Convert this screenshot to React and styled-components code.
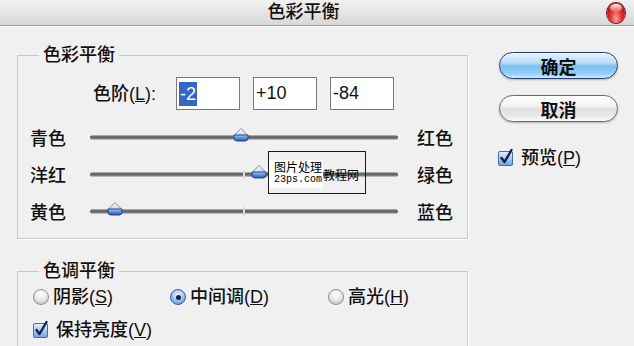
import React from "react";
import styled, { createGlobalStyle } from "styled-components";

const Global = createGlobalStyle`
  html, body { margin: 0; padding: 0; background: #f0f0f0; }
  body {
    width: 634px; height: 346px; overflow: hidden;
    font-family: "Liberation Sans", "Noto Sans CJK SC", sans-serif;
    color: #111;
  }
`;

const Window = styled.div`
  position: relative;
  width: 634px;
  height: 346px;
  overflow: hidden;
  background: #f0f0f0;
  display: flex;
  flex-direction: column;
`;

const TitleBar = styled.div`
  flex: none;
  height: 25px;
  display: flex;
  align-items: center;
  background: linear-gradient(#f1f1f1, #d8d8d8);
  border-bottom: 1px solid #9a9a9a;
  box-shadow: 0 1px 0 #fbfbfb;
`;

const Title = styled.div`
  flex: 1;
  text-align: center;
  font-size: 18px;
  font-weight: 500;
  line-height: 25px;
`;

const CloseBtn = styled.span`
  position: relative;
  flex: none;
  width: 18px;
  height: 20px;
  margin-right: 9px;
  border-radius: 50%;
  background: radial-gradient(ellipse at 50% 78%, #ffa0a0 0%, #ea3434 42%, #b01212 78%, #6e0808 100%);
  box-shadow: 0 0 0 1px #7e1c1c;
  &::before {
    content: "";
    position: absolute;
    left: 3px; right: 3px; top: 1px; height: 8px;
    border-radius: 50%;
    background: linear-gradient(rgba(255,255,255,0.95), rgba(255,255,255,0.15));
  }
`;

const Body = styled.div`
  display: flex;
  padding-left: 17px;
`;

const LeftCol = styled.div`
  width: 451px;
  display: flex;
  flex-direction: column;
`;

const Group = styled.fieldset`
  margin: ${(p) => p.$top}px 0 0 0;
  padding: ${(p) => p.$pt}px 0 ${(p) => p.$pb}px 0;
  border: 1px solid #c8c8c8;
  box-shadow: 1px 1px 0 #ffffff;
  min-width: 0;
`;

const Legend = styled.legend`
  margin-left: 21px;
  padding: 0 4px;
  font-size: 18px;
  font-weight: 500;
  line-height: 20px;
`;

const LevelsRow = styled.div`
  display: flex;
  align-items: center;
  gap: 13px;
  padding-left: 75px;
`;

const LevelsLabel = styled.span`
  width: 70px;
  font-size: 18px;
  font-weight: 500;
  line-height: 24px;
  white-space: nowrap;
`;

const Field = styled.div`
  box-sizing: border-box;
  width: 64px;
  height: 33px;
  border: 1px solid #7a7a7a;
  background: #fff;
  display: flex;
  align-items: center;
  padding-left: 2px;
  font-family: "Liberation Sans", Arial, sans-serif;
  font-size: 18px;
  color: #111;
`;

const Selected = styled.span`
  background: #3467c3;
  color: #fff;
  line-height: 24px;
  padding: 0 1px;
`;

const Sliders = styled.div`
  margin-top: 10px;
  display: flex;
  flex-direction: column;
`;

const SliderRow = styled.div`
  display: grid;
  grid-template-columns: 60px 308px auto;
  align-items: center;
  height: 37px;
  padding-left: 12px;
`;

const SideLabel = styled.span`
  font-size: 18px;
  font-weight: 500;
  line-height: 24px;
  margin-left: ${(p) => (p.$right ? 19 : 0)}px;
`;

const Track = styled.div`
  position: relative;
  height: 5px;
  margin-top: -3px;
  border-radius: 3px;
  background: linear-gradient(#c4c4c4 0%, #5c5c5c 35%, #6c6c6c 65%, #d4d4d4 100%);
  &::after {
    content: "";
    position: absolute;
    left: calc(50% - 1px);
    top: -2px;
    width: 2px;
    height: 9px;
    background: #dcdcdc;
  }
`;

const ThumbWrap = styled.span`
  position: absolute;
  top: -8px;
  width: 17px;
  height: 15px;
  transform: translateX(-50%);
  z-index: 1;
  display: block;
`;

const Watermark = styled.div`
  position: absolute;
  left: 268px;
  top: 151px;
  width: 98px;
  height: 43px;
  box-sizing: border-box;
  border: 1px solid #1a1a1a;
  z-index: 2;
`;

const WmText = styled.div`
  display: inline-flex;
  flex-direction: column;
  background: #fff;
  margin-top: 8px;
  padding: 0 1px 2px 5px;
  color: #000;
`;

const WmLine = styled.span`
  font-family: ${(p) => (p.$mono ? '"Liberation Mono", monospace' : '"Noto Sans CJK SC", sans-serif')};
  font-size: ${(p) => (p.$mono ? 10 : 12)}px;
  line-height: ${(p) => (p.$mono ? 12 : 14)}px;
`;

const WmExtra = styled.span`
  position: absolute;
  left: 54px;
  top: 15px;
  font-family: "Noto Sans CJK SC", sans-serif;
  font-size: 12px;
  line-height: 16px;
  color: #000;
`;

const Side = styled.div`
  margin-left: 31px;
  padding-top: 26px;
  width: 119px;
  display: flex;
  flex-direction: column;
`;

const PillButton = styled.button`
  box-sizing: border-box;
  width: 119px;
  height: 27px;
  margin-top: ${(p) => p.$mt || 0}px;
  padding: 0;
  border-radius: 14px;
  font-family: "Noto Sans CJK SC", sans-serif;
  font-size: 18px;
  font-weight: 700;
  line-height: 1;
  color: #111;
  border: 1.5px solid ${(p) => (p.$primary ? "#2a3a7a" : "#6a6a6a")};
  background: ${(p) =>
    p.$primary
      ? "linear-gradient(#e4f2fd 0%, #b8dcf8 40%, #7ebff1 52%, #90cbf6 80%, #c8edff 100%)"
      : "linear-gradient(#ffffff 0%, #f4f4f4 40%, #dfdfdf 52%, #e9e9e9 80%, #fcfcfc 100%)"};
  box-shadow: inset 0 1px 1px rgba(255, 255, 255, 0.8), 0 1px 2px rgba(0, 0, 0, 0.25);
`;

const CheckRow = styled.label`
  display: flex;
  align-items: center;
  gap: ${(p) => p.$gap || 7}px;
  margin-top: ${(p) => p.$mt || 0}px;
  margin-left: ${(p) => p.$ml || 0}px;
  height: ${(p) => p.$h || 24}px;
  font-size: 18px;
  font-weight: 500;
  line-height: 24px;
`;

const RadioGrid = styled.div`
  display: grid;
  grid-template-columns: 137px 158px auto;
  align-items: center;
  height: 26px;
  padding-left: 15px;
`;

const RadioItem = styled.label`
  display: flex;
  align-items: center;
  gap: 4px;
  font-size: 18px;
  font-weight: 500;
  line-height: 24px;
  white-space: nowrap;
`;

const Radio = styled.span`
  flex: none;
  box-sizing: border-box;
  width: 16px;
  height: 16px;
  border-radius: 50%;
  border: 1px solid ${(p) => (p.$on ? "#3b5c9c" : "#8e8e8e")};
  background: ${(p) =>
    p.$on
      ? "radial-gradient(circle at 50% 35%, #eef6ff 0%, #a2caf3 45%, #4a86d4 100%)"
      : "radial-gradient(circle at 50% 30%, #ffffff 0%, #e8e8e8 50%, #b6b6b6 100%)"};
  display: grid;
  place-items: center;
  &::after {
    content: "";
    width: 5px;
    height: 5px;
    border-radius: 50%;
    background: #182240;
    display: ${(p) => (p.$on ? "block" : "none")};
  }
`;

const Group2Rows = styled.div`
  display: flex;
  flex-direction: column;
  gap: 7px;
`;

const CheckRow2 = styled.div`
  padding-left: 15px;
`;

const Caption = styled.span`
  white-space: nowrap;
`;

function Thumb({ pct }) {
  return (
    <ThumbWrap style={{ left: `${pct}%` }}>
      <svg width="17" height="15" viewBox="0 0 17 15">
        <defs>
          <linearGradient id="roof" x1="0" y1="0" x2="0" y2="1">
            <stop offset="0" stopColor="#ffffff" />
            <stop offset="1" stopColor="#c9d3e2" />
          </linearGradient>
          <linearGradient id="body" x1="0" y1="0" x2="0" y2="1">
            <stop offset="0" stopColor="#a8c8f0" />
            <stop offset="0.5" stopColor="#5a8ed6" />
            <stop offset="1" stopColor="#2c58a6" />
          </linearGradient>
        </defs>
        <path d="M1.5 8.5 L8.5 1.5 L15.5 8.5 Z" fill="url(#roof)" stroke="#7d8ca8" strokeWidth="1" strokeLinejoin="round" />
        <path d="M1.5 8 L15.5 8 L15.5 11 Q15.5 14 12.5 14 L4.5 14 Q1.5 14 1.5 11 Z" fill="url(#body)" stroke="#26438a" strokeWidth="1" />
      </svg>
    </ThumbWrap>
  );
}

function CheckBox() {
  return (
    <svg width="16" height="18" viewBox="0 0 16 18" style={{ flex: "none", marginTop: "-3px" }}>
      <defs>
        <linearGradient id="cbg" x1="0" y1="0" x2="0" y2="1">
          <stop offset="0" stopColor="#e6f1fc" />
          <stop offset="1" stopColor="#6ea4e4" />
        </linearGradient>
      </defs>
      <rect x="0.5" y="3.5" width="14" height="14" rx="1.5" fill="url(#cbg)" stroke="#4a6ca4" />
      <path d="M3.5 10 L6.5 14 L13.5 2" fill="none" stroke="#14204a" strokeWidth="2.4" strokeLinecap="round" strokeLinejoin="round" />
    </svg>
  );
}

const sliders = [
  { left: "青色", right: "红色", value: -2 },
  { left: "洋红", right: "绿色", value: 10 },
  { left: "黄色", right: "蓝色", value: -84 },
];

export default function App() {
  return (
    <>
      <Global />
      <Window>
        <TitleBar>
          <Title>色彩平衡</Title>
          <CloseBtn />
        </TitleBar>
        <Body>
          <LeftCol>
            <Group $top={19} $pt={12} $pb={7}>
              <Legend>色彩平衡</Legend>
              <LevelsRow>
                <LevelsLabel>
                  色阶(<u>L</u>):
                </LevelsLabel>
                <Field>
                  <Selected>-2</Selected>
                </Field>
                <Field>+10</Field>
                <Field>-84</Field>
              </LevelsRow>
              <Sliders>
                {sliders.map((s) => (
                  <SliderRow key={s.left}>
                    <SideLabel>{s.left}</SideLabel>
                    <Track>
                      <Thumb pct={((s.value + 100) / 200) * 100} />
                    </Track>
                    <SideLabel $right>{s.right}</SideLabel>
                  </SliderRow>
                ))}
              </Sliders>
            </Group>
            <Group $top={22} $pt={3} $pb={30}>
              <Legend>色调平衡</Legend>
              <Group2Rows>
                <RadioGrid>
                  <RadioItem>
                    <Radio />
                    <Caption>阴影(<u>S</u>)</Caption>
                  </RadioItem>
                  <RadioItem>
                    <Radio $on />
                    <Caption>中间调(<u>D</u>)</Caption>
                  </RadioItem>
                  <RadioItem>
                    <Radio />
                    <Caption>高光(<u>H</u>)</Caption>
                  </RadioItem>
                </RadioGrid>
                <CheckRow2>
                  <CheckRow $h={26}>
                    <CheckBox />
                    <Caption>保持亮度(<u>V</u>)</Caption>
                  </CheckRow>
                </CheckRow2>
              </Group2Rows>
            </Group>
          </LeftCol>
          <Side>
            <PillButton $primary>确定</PillButton>
            <PillButton $mt={16}>取消</PillButton>
            <CheckRow $mt={24} $ml={-1}>
              <CheckBox />
              <Caption>预览(<u>P</u>)</Caption>
            </CheckRow>
          </Side>
        </Body>
        <Watermark>
          <WmText>
            <WmLine>图片处理</WmLine>
            <WmLine $mono>23ps.com</WmLine>
          </WmText>
          <WmExtra>教程网</WmExtra>
        </Watermark>
      </Window>
    </>
  );
}
